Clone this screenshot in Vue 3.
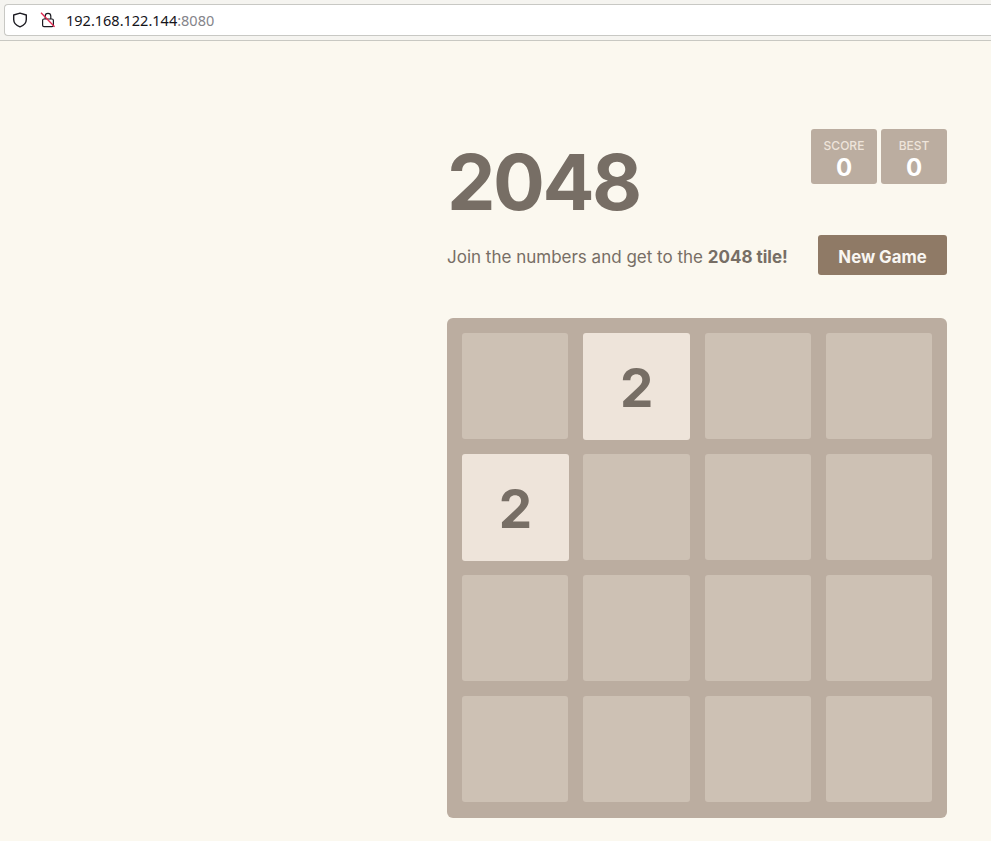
<template>
  <div class="browser-bar">
    <div class="url-bar">
      <svg class="icon" width="16" height="16" viewBox="0 0 16 16" fill="none" stroke="#1c1b22" stroke-width="1.4">
        <path d="M8 1.2 14.3 3v4.4c0 3.6-2.6 6-6.3 7.4C4.300 13.400 1.700 11 1.700 7.400V3z" stroke-linejoin="round" />
      </svg>
      <svg class="icon lock" width="16" height="16" viewBox="0 0 16 16" fill="none">
        <path d="M5.200 7V4.200a2.800 2.800 0 0 1 5.600 0V7" stroke="#1c1b22" stroke-width="1.200" />
        <rect x="2.600" y="7" width="10.800" height="7.600" rx="1.400" stroke="#1c1b22" stroke-width="1.200" />
        <path d="M1 .8 14.600 14.800" stroke="#e22850" stroke-width="1.300" />
      </svg>
      <span class="host">192.168.122.144<span class="port">:8080</span></span>
    </div>
  </div>

  <main class="page">
    <div class="game">
      <header class="top">
        <h1>2048</h1>
        <div class="scores">
          <div v-for="s in scores" :key="s.label" class="score-box">
            <span class="score-label">{{ s.label }}</span>
            <span class="score-value">{{ s.value }}</span>
          </div>
        </div>
      </header>

      <div class="intro">
        <p>Join the numbers and get to the <strong>2048 tile!</strong></p>
        <button class="new-game">New Game</button>
      </div>

      <div class="board">
        <div v-for="(cell, i) in cells" :key="i" :class="['cell', { filled: cell }]">{{ cell || '' }}</div>
      </div>
    </div>
  </main>
</template>

<script setup>
const scores = [
  { label: 'SCORE', value: 0 },
  { label: 'BEST', value: 0 }
]

const cells = [
  0, 2, 0, 0,
  2, 0, 0, 0,
  0, 0, 0, 0,
  0, 0, 0, 0
]
</script>

<style>
html,
body {
  background: #fbf8ef;
  overflow: hidden;
}
</style>

<style scoped>
.browser-bar {
  height: 41px;
  box-sizing: border-box;
  padding: 4px 0 4px 4px;
  background: #f5f4f0;
  border-bottom: 1px solid #c8c8c2;
}

.url-bar {
  height: 32px;
  box-sizing: border-box;
  display: flex;
  align-items: center;
  padding-left: 7px;
  background: #fff;
  border: 1px solid #c8c8c4;
  border-right: none;
  border-radius: 4px 0 0 4px;
}

.icon {
  flex-shrink: 0;
}

.lock {
  margin-left: 12px;
}

.host {
  margin-left: 10px;
  font: 14.5px "Noto Sans", sans-serif;
  color: #15141a;
}

.port {
  color: #84848a;
}

.page {
  display: flex;
  justify-content: flex-end;
  padding: 88px 44px 0 0;
  font-family: Inter, "Noto Sans", sans-serif;
  color: #776e65;
}

.game {
  width: 500px;
}

.top {
  display: flex;
  justify-content: space-between;
  align-items: flex-start;
  height: 106px;
}

h1 {
  margin: 0;
  font-size: 77px;
  line-height: 106px;
  font-weight: 700;
  letter-spacing: -2.5px;
}

.scores {
  display: flex;
  gap: 4px;
}

.score-box {
  width: 66px;
  height: 55px;
  box-sizing: border-box;
  padding-top: 9px;
  display: flex;
  flex-direction: column;
  align-items: center;
  background: #bbada0;
  border-radius: 3px;
}

.score-label {
  font-size: 12px;
  line-height: 15px;
  font-weight: 500;
  color: #eee4da;
}

.score-value {
  margin-top: 2px;
  font-size: 24px;
  line-height: 26px;
  font-weight: 700;
  color: #fff;
}

.intro {
  display: flex;
  justify-content: space-between;
  align-items: center;
  height: 40px;
  margin-bottom: 43px;
}

.intro p {
  margin: 4px 0 0;
  font-size: 17px;
}

.new-game {
  width: 129px;
  height: 40px;
  padding: 4px 0 0;
  border: none;
  border-radius: 3px;
  background: #8f7a66;
  color: #f9f6f2;
  font-family: inherit;
  font-size: 16.75px;
  font-weight: 700;
}

.board {
  width: 500px;
  height: 500px;
  box-sizing: border-box;
  padding: 15px;
  display: grid;
  grid-template-columns: repeat(4, 1fr);
  grid-template-rows: repeat(4, 106px);
  gap: 15px;
  background: #bbada0;
  border-radius: 6px;
}

.cell {
  display: flex;
  align-items: center;
  justify-content: center;
  background: #cdc1b4;
  border-radius: 3px;
}

.cell.filled {
  margin: 0 -0.5px -1px 0;
  padding-top: 2px;
  background: #eee4da;
  font-size: 53px;
  font-weight: 700;
}
</style>
